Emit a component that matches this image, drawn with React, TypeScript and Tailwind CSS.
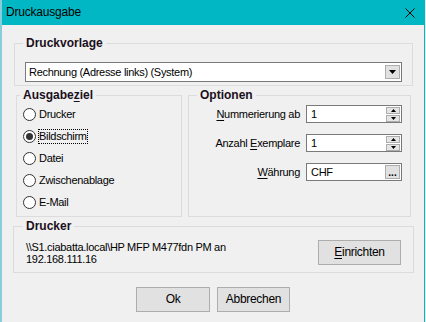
import React from "react";

const targets = ["Drucker", "Bildschirm", "Datei", "Zwischenablage", "E-Mail"];

const GroupBox = ({
  label,
  legendClass,
  className,
  children,
}: {
  label: React.ReactNode;
  legendClass: string;
  className: string;
  children?: React.ReactNode;
}) => {
  return (
    <fieldset className={`border border-[#dcdcdc] ${className}`}>
      <legend
        className={`px-[3px] text-[12px] font-bold leading-[16px] tracking-normal text-[#1b0f1b] ${legendClass}`}
      >
        {label}
      </legend>
      {children}
    </fieldset>
  );
};

const Spinner = () => {
  return (
    <div className="absolute right-[1px] top-[1px] flex flex-col gap-[1px]">
      <div className="flex h-[7px] w-[14px] items-center justify-center border border-[#adadad] bg-[#e5e5e5]">
        <svg width="5" height="3" viewBox="0 0 5 3">
          <polygon points="0,3 5,3 2.5,0" fill="#000" />
        </svg>
      </div>
      <div className="flex h-[7px] w-[14px] items-center justify-center border border-[#adadad] bg-[#e5e5e5]">
        <svg width="5" height="3" viewBox="0 0 5 3">
          <polygon points="0,0 5,0 2.5,3" fill="#000" />
        </svg>
      </div>
    </div>
  );
};

const Button = ({ children, className }: { children: React.ReactNode; className: string }) => {
  return (
    <div
      className={`flex h-[25px] items-center justify-center border border-[#adadad] bg-[#e1e1e1] text-[12px] tracking-[-0.3px] ${className}`}
    >
      {children}
    </div>
  );
};

export default function App() {
  return (
    <div className="flex h-[322px] w-[426px] overflow-hidden bg-[#f0f0f0] font-['Liberation_Sans',Arial,sans-serif] text-[11px] leading-[13px] tracking-[-0.3px] text-black">
      <div className="w-[2px] shrink-0 bg-[#8acbdc]" />

      <div className="flex w-[423px] shrink-0 flex-col border-r border-[#00b7c3]">
        {/* title bar */}
        <div className="flex h-[25px] shrink-0 items-center justify-between bg-[#00b7c3] pl-[4px] pr-[9px]">
          <span className="text-[12px] tracking-[-0.2px]">Druckausgabe</span>
          <svg width="10" height="10" viewBox="0 0 10 10">
            <path d="M0.5 0.5 L9.5 9.5 M9.5 0.5 L0.5 9.5" stroke="#000" strokeWidth="1" />
          </svg>
        </div>

        {/* Druckvorlage */}
        <GroupBox label="Druckvorlage" legendClass="ml-[8px]" className="ml-[12px] mt-[10px] h-[51px] w-[399px]">
          <div className="relative ml-[10px] mt-[11px] flex h-[20px] w-[377px] items-center border border-[#7a7a7a] bg-white pl-[3px]">
            Rechnung (Adresse links) (System)
            <div className="absolute right-[1px] top-[2px] flex h-[14px] w-[15px] items-center justify-center border border-[#adadad] bg-[#e1e1e1]">
              <svg width="7" height="4" viewBox="0 0 7 4">
                <polygon points="0,0 7,0 3.5,4" fill="#000" />
              </svg>
            </div>
          </div>
        </GroupBox>

        <div className="ml-[14px] mt-[1px] flex gap-[6px]">
          {/* Ausgabeziel */}
          <GroupBox
            label={
              <>
                Ausgabe<span className="underline underline-offset-2">z</span>iel
              </>
            }
            legendClass="ml-[3px]"
            className="h-[130px] w-[166px]"
          >
            <div className="flex flex-col pl-[6px]">
              {targets.map((t) => (
                <div key={t} className="flex h-[22px] items-center">
                  <div className="flex h-[13px] w-[13px] items-center justify-center rounded-full border border-[#333] bg-white">
                    {t === "Bildschirm" && <div className="h-[7px] w-[7px] rounded-full bg-[#333]" />}
                  </div>
                  {t === "Bildschirm" ? (
                    <span className="ml-[2px] border border-dotted border-black">{t}</span>
                  ) : (
                    <span className="ml-[3px]">{t}</span>
                  )}
                </div>
              ))}
            </div>
          </GroupBox>

          {/* Optionen */}
          <GroupBox label="Optionen" legendClass="ml-[8px]" className="h-[130px] w-[223px]">
            <div className="mt-[2px] grid grid-cols-[1fr_96px] items-center gap-x-[6px] gap-y-[11px] pr-[8px]">
              <span className="text-right">
                <span className="underline underline-offset-2">N</span>ummerierung ab
              </span>
              <div className="relative flex h-[18px] items-center border border-[#7a7a7a] bg-white pl-[4px]">
                1
                <Spinner />
              </div>

              <span className="text-right">
                Anzahl <span className="underline underline-offset-2">E</span>xemplare
              </span>
              <div className="relative flex h-[18px] items-center border border-[#7a7a7a] bg-white pl-[4px]">
                1
                <Spinner />
              </div>

              <span className="text-right">
                <span className="underline underline-offset-2">W</span>ährung
              </span>
              <div className="relative flex h-[18px] items-center border border-[#7a7a7a] bg-white pl-[4px]">
                CHF
                <div className="absolute right-[1px] top-[1px] flex h-[14px] w-[15px] items-end justify-center border border-[#adadad] bg-[#e1e1e1] pb-[1px] text-[10px] font-bold leading-[8px] tracking-[0px]">
                  ...
                </div>
              </div>
            </div>
          </GroupBox>
        </div>

        {/* Drucker */}
        <GroupBox label="Drucker" legendClass="ml-[9px]" className="ml-[11px] mt-[1px] h-[55px] w-[401px]">
          <div className="mt-[6px] flex items-start justify-between pl-[12px] pr-[12px]">
            <div className="mt-[1px] leading-[12px]">
              \\S1.ciabatta.local\HP MFP M477fdn PM an
              <br />
              192.168.111.16
            </div>
            <Button className="w-[83px]">
              <span>
                <span className="underline underline-offset-2">E</span>inrichten
              </span>
            </Button>
          </div>
        </GroupBox>

        <div className="mt-[14px] flex justify-center gap-[7px]">
          <Button className="w-[74px]">Ok</Button>
          <Button className="w-[73px]">Abbrechen</Button>
        </div>
      </div>

      <div className="w-[1px] shrink-0 bg-[#e9e9e9]" />
    </div>
  );
}
